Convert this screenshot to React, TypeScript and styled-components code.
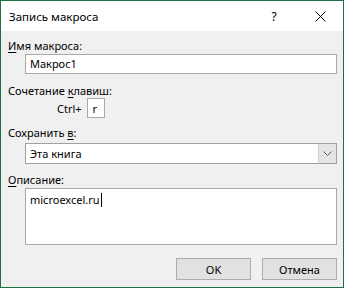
import React from "react";
import styled, { createGlobalStyle } from "styled-components";

const GlobalStyle = createGlobalStyle`
  html, body {
    margin: 0;
    padding: 0;
    background: #ffffff;
  }
  body {
    font-family: "Noto Sans", "Open Sans", sans-serif;
    font-size: 11px;
    color: #000000;
  }
`;

const Dialog = styled.div`
  width: 344px;
  height: 288px;
  box-sizing: border-box;
  border: 1px solid #1e7145;
  display: flex;
  flex-direction: column;
  background: #f0f0f0;
`;

const TitleBar = styled.div`
  height: 30px;
  background: #ffffff;
  display: flex;
  align-items: center;
  padding-left: 8px;
`;

const Title = styled.div`
  flex: 1;
  font-size: 11.5px;
`;

const TitleButton = styled.div<{ $width: number }>`
  width: ${(p) => p.$width}px;
  height: 30px;
  display: flex;
  align-items: center;
  justify-content: center;
  font-size: 12px;
`;

const Body = styled.div`
  flex: 1;
  display: flex;
  flex-direction: column;
  padding: 0 6px 0 7px;
`;

const Label = styled.div<{ $top: number }>`
  margin-top: ${(p) => p.$top}px;
  height: 16px;
  line-height: 16px;
`;

const Key = styled.u`
  text-underline-offset: 2px;
`;

const Field = styled.div<{ $height: number }>`
  margin-left: 17px;
  height: ${(p) => p.$height}px;
  box-sizing: border-box;
  border: 1px solid #a9a9a9;
  background: #ffffff;
  display: flex;
  align-items: ${(p) => (p.$height > 30 ? "flex-start" : "center")};
  padding: ${(p) => (p.$height > 30 ? "3px 4px" : "0 4px")};
  line-height: 16px;
`;

const ShortcutRow = styled.div`
  margin-top: -1px;
  height: 20px;
  display: flex;
  align-items: center;
  padding-left: 49px;
  gap: 5px;
`;

const KeyBox = styled.div`
  width: 18px;
  height: 20px;
  box-sizing: border-box;
  border: 1px solid #a9a9a9;
  background: #ffffff;
  display: flex;
  align-items: center;
  padding-left: 5px;
`;

const Select = styled.div`
  margin-left: 17px;
  margin-top: 2px;
  height: 21px;
  box-sizing: border-box;
  border: 1px solid #a0a0a0;
  background: #ffffff;
  display: flex;
`;

const SelectValue = styled.div`
  flex: 1;
  display: flex;
  align-items: center;
  padding-left: 4px;
`;

const SelectButton = styled.div`
  width: 17px;
  background: #e5e5e5;
  border-left: 1px solid #cfcfcf;
  display: flex;
  align-items: center;
  justify-content: center;
`;

const Caret = styled.span`
  display: inline-block;
  width: 1px;
  height: 14px;
  margin-left: 1px;
  background: #000000;
  vertical-align: -3px;
`;

const Buttons = styled.div`
  margin-top: 13px;
  display: flex;
  justify-content: flex-end;
  gap: 11px;
`;

const Button = styled.div`
  width: 75px;
  height: 22px;
  box-sizing: border-box;
  border: 1px solid #adadad;
  background: #e1e1e1;
  display: flex;
  align-items: center;
  justify-content: center;
`;

export default function App() {
  return (
    <>
      <GlobalStyle />
      <Dialog>
        <TitleBar>
          <Title>Запись макроса</Title>
          <TitleButton $width={46}>?</TitleButton>
          <TitleButton $width={46}>
            <svg width="11" height="11" viewBox="0 0 11 11">
              <path d="M0.5 0.5 L10.5 10.5 M10.5 0.5 L0.5 10.5" stroke="#000" strokeWidth="1" />
            </svg>
          </TitleButton>
        </TitleBar>
        <Body>
          <Label $top={7}>
            <Key>И</Key>мя макроса:
          </Label>
          <Field $height={20}>Макрос1</Field>
          <Label $top={9}>
            Сочетание <Key>к</Key>лавиш:
          </Label>
          <ShortcutRow>
            <span>Ctrl+</span>
            <KeyBox>r</KeyBox>
          </ShortcutRow>
          <Label $top={7}>
            Сохранить <Key>в</Key>:
          </Label>
          <Select>
            <SelectValue>Эта книга</SelectValue>
            <SelectButton>
              <svg width="9" height="5" viewBox="0 0 9 5">
                <path d="M0.5 0.5 L4.5 4.5 L8.5 0.5" stroke="#555" strokeWidth="1" fill="none" />
              </svg>
            </SelectButton>
          </Select>
          <Label $top={8}>
            <Key>О</Key>писание:
          </Label>
          <Field $height={57}>
            <span>
              microexcel.ru
              <Caret />
            </span>
          </Field>
          <Buttons>
            <Button>OK</Button>
            <Button>Отмена</Button>
          </Buttons>
        </Body>
      </Dialog>
    </>
  );
}
